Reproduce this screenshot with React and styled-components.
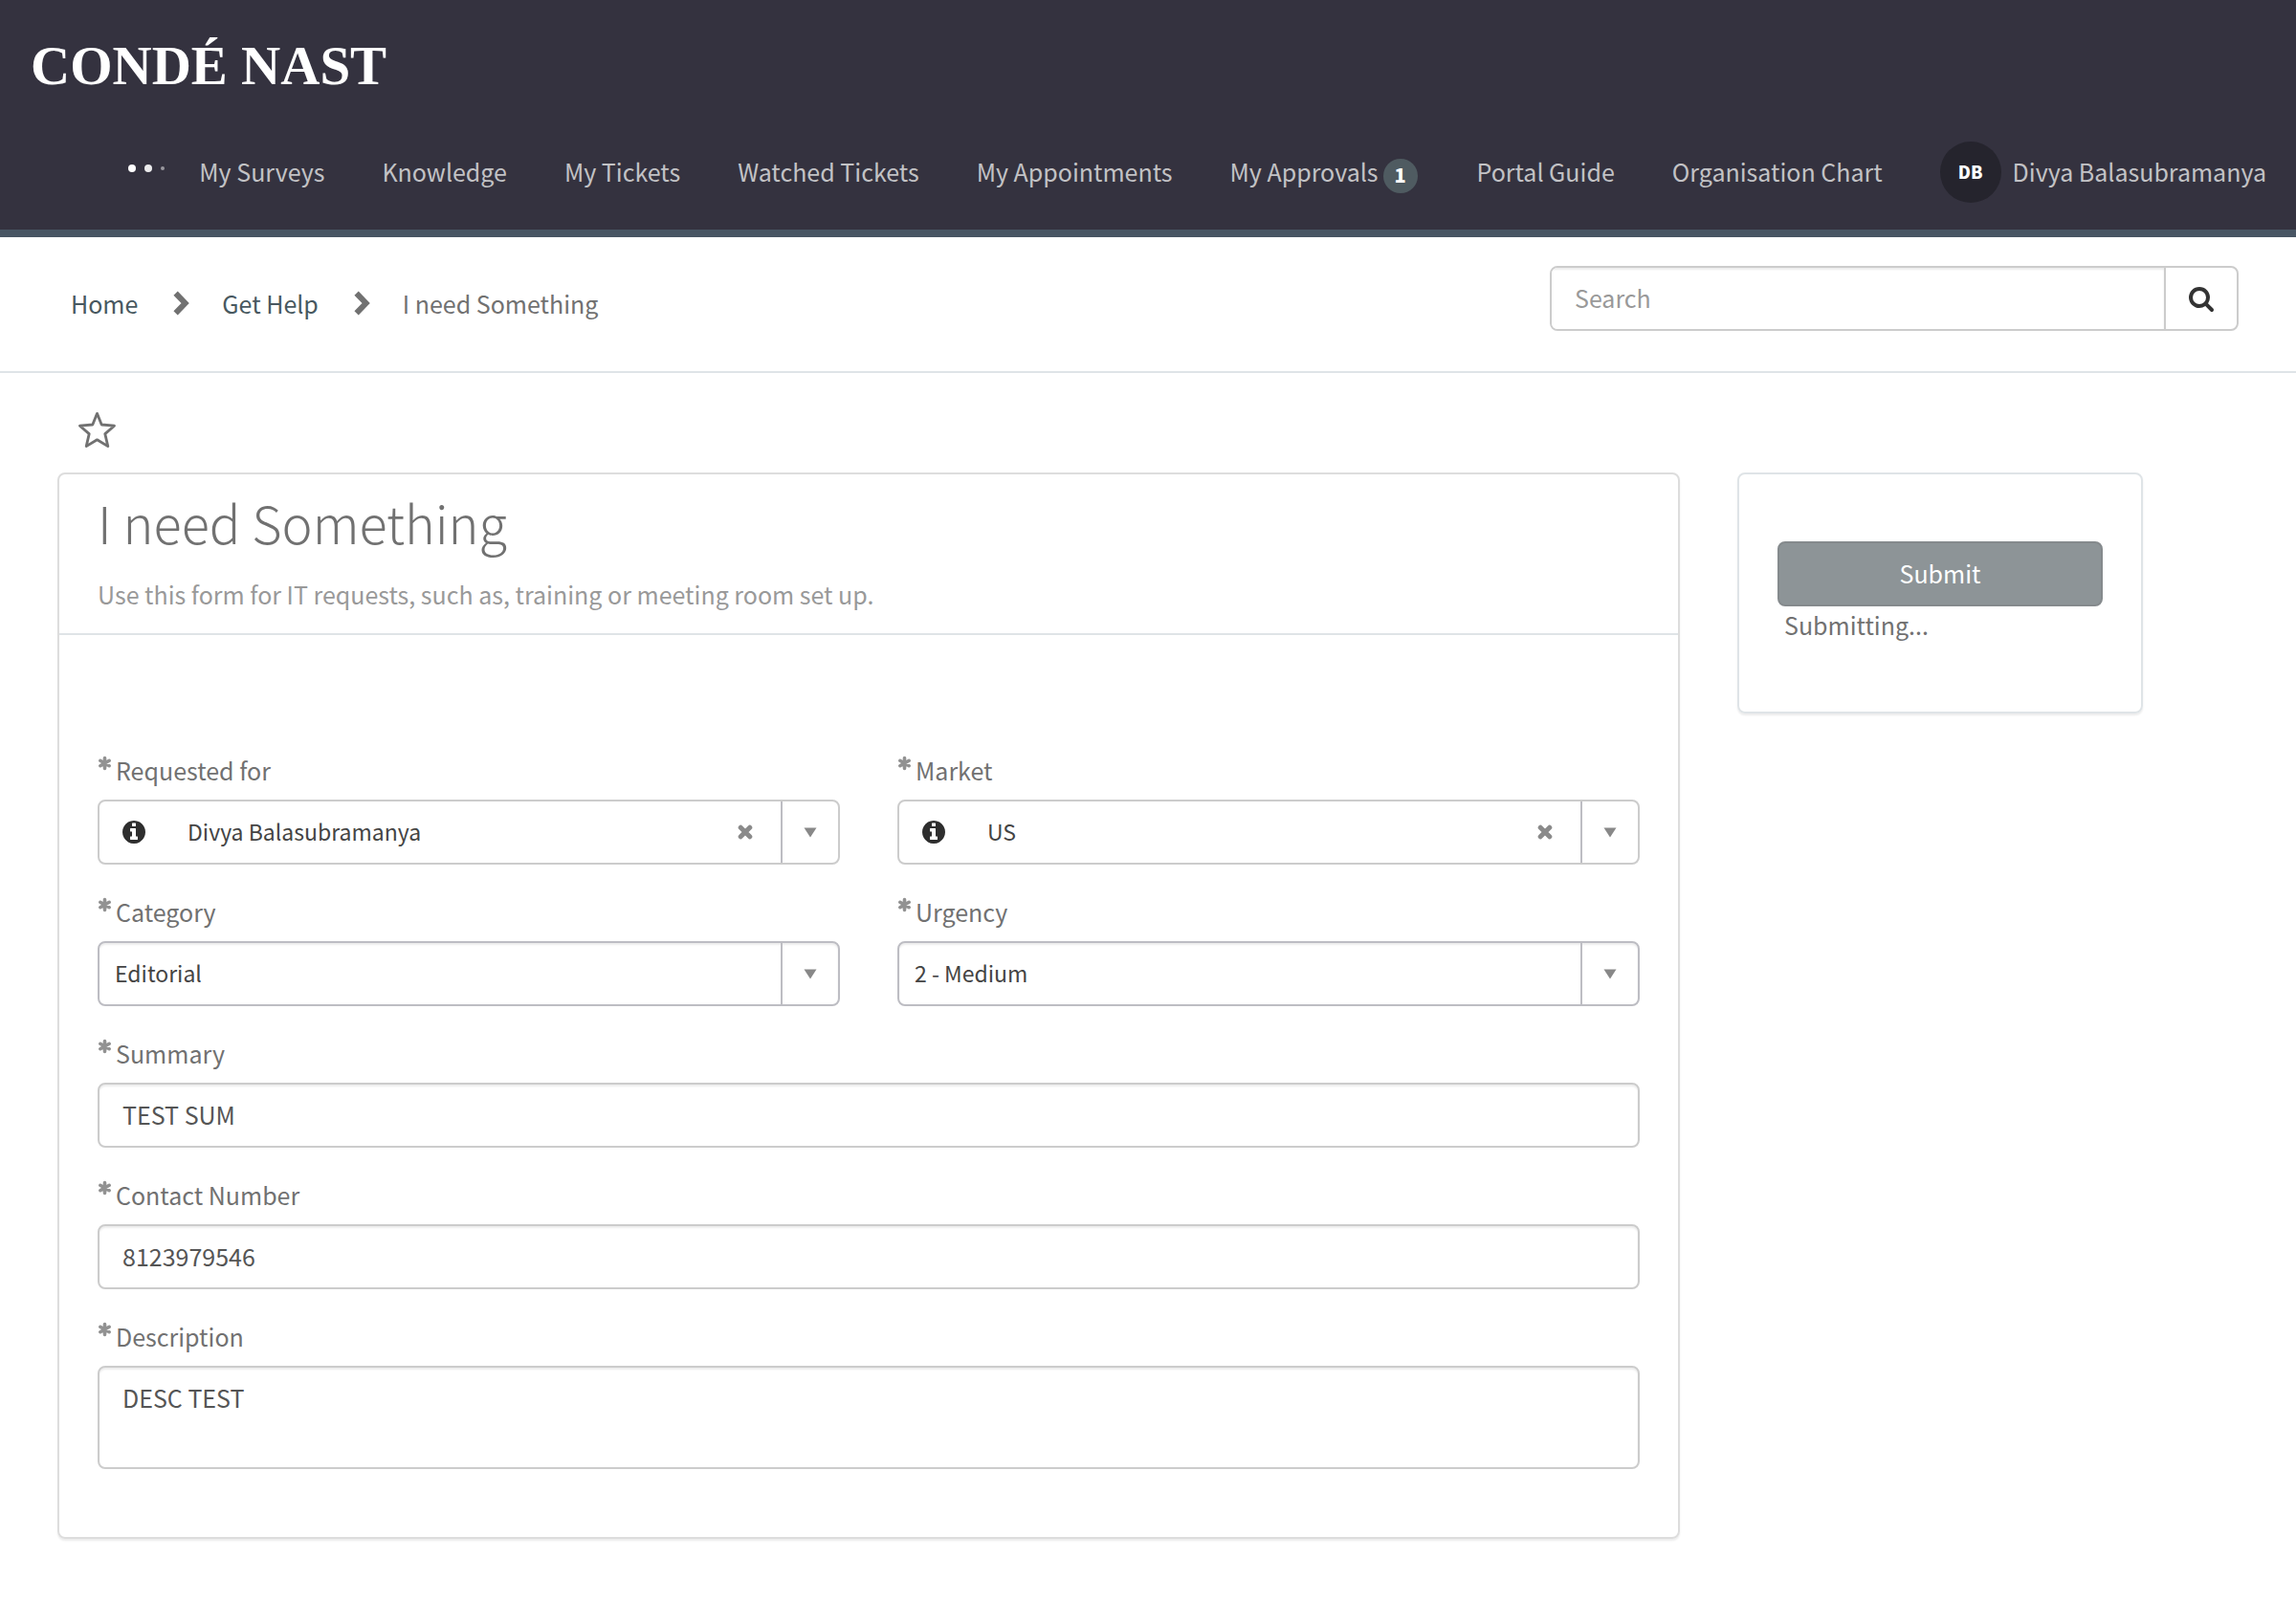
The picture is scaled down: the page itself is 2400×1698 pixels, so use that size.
import React from "react";
import styled, { createGlobalStyle } from "styled-components";

const GlobalStyle = createGlobalStyle`
  *, *::before, *::after { box-sizing: border-box; }
  body {
    margin: 0;
    background: #ffffff;
    color: #717171;
    font-family: "Noto Sans CJK SC", "Noto Sans", sans-serif;
    font-size: 25px;
    line-height: 38px;
  }
  h1, p, ul, ol { margin: 0; padding: 0; }
  ul, ol { list-style: none; }
  a { color: inherit; text-decoration: none; }
  button, input, textarea, select { font: inherit; color: inherit; margin: 0; }
  button { background: none; border: 0; padding: 0; cursor: pointer; }
  svg { display: block; flex: none; }
`;

const Header = styled.header`
  background: #34323f;
  border-bottom: 8px solid #485563;
`;

const Brand = styled.a`
  display: block;
  padding: 39px 32px 21px;
  color: #ffffff;
  font-family: "Liberation Serif", serif;
  font-size: 57px;
  font-weight: 700;
  line-height: 60px;
`;

const Nav = styled.nav`
  display: flex;
  align-items: center;
  justify-content: flex-end;
  height: 120px;
  padding-right: 31px;
  color: #c2c2c5;
`;

const Loading = styled.span`
  display: flex;
  align-items: center;
  gap: 9px;
  padding-bottom: 8px;
  margin-right: 36px;
`;

const Dot = styled.i`
  width: ${(p) => p.$size}px;
  height: ${(p) => p.$size}px;
  border-radius: 50%;
  background: #ffffff;
  opacity: ${(p) => p.$opacity};
`;

const NavList = styled.ul`
  display: flex;
  align-items: center;
  gap: 60px;
`;

const NavLink = styled.a`
  display: flex;
  align-items: center;
  white-space: nowrap;
`;

const NavText = styled.span`
  padding-bottom: 2px;
`;

const Badge = styled.span`
  width: 36px;
  height: 36px;
  margin: 8px 2px 0 5px;
  border-radius: 50%;
  background: #4f5b61;
  color: #ffffff;
  font-size: 20px;
  font-weight: 900;
  line-height: 34px;
  text-align: center;
`;

const Avatar = styled.span`
  width: 64px;
  height: 64px;
  margin-right: 12px;
  border-radius: 50%;
  background: #25242d;
  color: #ffffff;
  font-size: 18px;
  font-weight: 900;
  line-height: 62px;
  text-align: center;
`;

const TopBar = styled.div`
  display: flex;
  justify-content: space-between;
  align-items: flex-start;
  padding: 30px 60px 32px 74px;
  border-bottom: 2px solid #dfe4e7;
`;

const Crumbs = styled.ol`
  display: flex;
  align-items: center;
  height: 78px;
`;

const Crumb = styled.li`
  display: flex;
  align-items: center;
  color: ${(p) => (p.$current ? "#717171" : "#485860")};

  svg { margin: 0 34px 0 37px; }
`;

const Search = styled.form`
  display: flex;
  flex: 0 1 720px;
  height: 68px;
  border: 2px solid #cccccc;
  border-radius: 8px;
  overflow: hidden;
`;

const SearchInput = styled.input`
  flex: 1;
  min-width: 0;
  padding: 0 24px 2px;
  border: 0;
  outline: 0;
  background: #ffffff;
  box-shadow: inset 0 2px 2px rgba(0, 0, 0, 0.08);

  &::placeholder { color: #999999; opacity: 1; }
`;

const SearchButton = styled.button`
  display: flex;
  align-items: center;
  justify-content: center;
  width: 76px;
  border-left: 2px solid #cccccc;
  color: #333333;
`;

const Main = styled.main`
  padding: 0 160px 80px 60px;
`;

const Favourite = styled.button`
  display: block;
  margin: 40px 0 24px 21px;
  color: #717171;
`;

const Columns = styled.div`
  display: grid;
  grid-template-columns: minmax(0, 4fr) minmax(0, 1fr);
  gap: 60px;
  align-items: start;
`;

const Panel = styled.section`
  border: 2px solid ${(p) => p.$edge};
  border-radius: 8px;
  box-shadow: 0 2px 2px rgba(0, 0, 0, 0.08);
`;

const PanelHead = styled.div`
  padding: 20px 40px 22px;
  border-bottom: 2px solid #dfe4e7;
`;

const Title = styled.h1`
  margin-bottom: 26px;
  font-size: 54px;
  font-weight: 300;
  line-height: 60px;
`;

const Lead = styled.p`
  color: #999999;
`;

const Form = styled.form`
  display: grid;
  grid-template-columns: repeat(2, minmax(0, 1fr));
  gap: 30px 60px;
  padding: 122px 40px 71px;
`;

const FieldBox = styled.div`
  grid-column: ${(p) => (p.$wide ? "1 / -1" : "auto")};
`;

const Label = styled.label`
  display: flex;
  gap: 4px;
  margin-bottom: 12px;

  svg { margin-top: 4px; }
`;

const TextInput = styled.input`
  display: block;
  width: 100%;
  height: 68px;
  padding: 0 24px 2px;
  border: 2px solid #cccccc;
  border-radius: 8px;
  background: #ffffff;
  box-shadow: inset 0 2px 2px rgba(0, 0, 0, 0.08);
  color: #555555;
`;

const TextArea = styled.textarea`
  display: block;
  width: 100%;
  height: 108px;
  padding: 12px 24px;
  border: 2px solid #cccccc;
  border-radius: 8px;
  background: #ffffff;
  box-shadow: inset 0 2px 2px rgba(0, 0, 0, 0.08);
  color: #555555;
  resize: none;
`;

const Combo = styled.div`
  display: flex;
  height: 68px;
  border: 2px solid ${(p) => (p.$plain ? "#bdbdc3" : "#cccccc")};
  border-radius: 8px;
  box-shadow: ${(p) => (p.$plain ? "inset 0 2px 2px rgba(0, 0, 0, 0.08)" : "none")};
  color: #444444;
`;

const InfoButton = styled.button`
  width: 76px;
  padding-left: 22px;
  color: #2e2e2e;
`;

const Select = styled.select`
  flex: 1;
  min-width: 0;
  padding: 0 16px 2px;
  border: 0;
  outline: 0;
  appearance: none;
  background: transparent;
  color: #444444;
  font-size: 23px;
`;

const ClearButton = styled.button`
  display: flex;
  align-items: center;
  justify-content: center;
  width: 74px;
  color: #8a8a8a;
`;

const Arrow = styled.span`
  display: flex;
  align-items: center;
  justify-content: center;
  width: 60px;
  border-left: 2px solid #bdbdc3;
  color: #888888;
`;

const SubmitBox = styled.div`
  padding: 70px 40px 72px;
`;

const SubmitButton = styled.button`
  display: block;
  width: 100%;
  height: 68px;
  padding-bottom: 2px;
  border: 2px solid #858a8d;
  border-radius: 8px;
  background: #8d9497;
  color: #ffffff;
`;

const Status = styled.p`
  padding-left: 7px;
`;

const SearchIcon = () => (
  <svg width="28" height="28" viewBox="0 0 1792 1792" fill="currentColor" aria-hidden="true">
    <path d="M1216 832q0-185-131.5-316.5t-316.5-131.5-316.5 131.5-131.5 316.5 131.5 316.5 316.5 131.5 316.5-131.5 131.5-316.5zm512 832q0 52-38 90t-90 38q-54 0-90-38l-343-342q-179 124-399 124-143 0-273.5-55.5t-225-150-150-225-55.5-273.5 55.5-273.5 150-225 225-150 273.5-55.5 273.5 55.5 225 150 150 225 55.5 273.5q0 220-124 399l343 343q37 37 37 90z" />
  </svg>
);

const InfoIcon = () => (
  <svg width="28" height="28" viewBox="0 0 1792 1792" fill="currentColor" aria-hidden="true">
    <path d="M1152 1376v-160q0-14-9-23t-23-9h-96v-512q0-14-9-23t-23-9h-320q-14 0-23 9t-9 23v160q0 14 9 23t23 9h96v320h-96q-14 0-23 9t-9 23v160q0 14 9 23t23 9h448q14 0 23-9t9-23zm-128-896v-160q0-14-9-23t-23-9h-192q-14 0-23 9t-9 23v160q0 14 9 23t23 9h192q14 0 23-9t9-23zm640 416q0 209-103 385.5t-279.5 279.5-385.5 103-385.5-103-279.5-279.5-103-385.5 103-385.5 279.5-279.5 385.5-103 385.5 103 279.5 279.5 103 385.5z" />
  </svg>
);

const ChevronIcon = () => (
  <svg width="17" height="26" viewBox="0 0 17 26" fill="none" stroke="#717171" strokeWidth="6" aria-hidden="true">
    <path d="M2.6 2.6 12.6 13 2.6 23.4" />
  </svg>
);

const StarIcon = () => (
  <svg width="40" height="40" viewBox="0 0 40 40" fill="none" stroke="currentColor" strokeWidth="2.8" strokeLinejoin="round" aria-hidden="true">
    <path d="M20.5 2.4 25.2 14 38.5 15.2 28.8 23.6 31.8 36.6 20.5 29.8 9.2 36.6 12.2 23.6 2.5 15.2 15.8 14Z" />
  </svg>
);

const RequiredIcon = () => (
  <svg width="15" height="16" viewBox="0 0 15 16" stroke="#929292" strokeWidth="3.6" strokeLinecap="round" role="img" aria-label="Required">
    <path d="M7.5 2.6v10.8M2.8 5.3l9.4 5.4M12.2 5.3l-9.4 5.4" />
  </svg>
);

const CrossIcon = () => (
  <svg width="16" height="16" viewBox="0 0 16 16" stroke="currentColor" strokeWidth="5" strokeLinecap="round" aria-hidden="true">
    <path d="M3.2 3.2l9.6 9.6M12.8 3.2l-9.6 9.6" />
  </svg>
);

const ArrowIcon = () => (
  <svg width="14" height="11" viewBox="0 0 14 11" fill="currentColor" aria-hidden="true">
    <path d="M0.5 0.5h13L7 10.5z" />
  </svg>
);

const NAV_ITEMS = [
  { text: "My Surveys" },
  { text: "Knowledge" },
  { text: "My Tickets" },
  { text: "Watched Tickets" },
  { text: "My Appointments" },
  { text: "My Approvals", count: 1 },
  { text: "Portal Guide" },
  { text: "Organisation Chart" },
];

function Field({ id, label, wide, children }) {
  return (
    <FieldBox $wide={wide}>
      <Label htmlFor={id}>
        <RequiredIcon />
        {label}
      </Label>
      {children}
    </FieldBox>
  );
}

function ComboField({ id, label, value, reference }) {
  return (
    <Field id={id} label={label}>
      <Combo $plain={!reference}>
        {reference && (
          <InfoButton type="button" aria-label={`Show details for ${label}`}>
            <InfoIcon />
          </InfoButton>
        )}
        <Select id={id} defaultValue={value}>
          <option>{value}</option>
        </Select>
        {reference && (
          <ClearButton type="button" aria-label={`Clear ${label}`}>
            <CrossIcon />
          </ClearButton>
        )}
        <Arrow>
          <ArrowIcon />
        </Arrow>
      </Combo>
    </Field>
  );
}

export default function App() {
  return (
    <>
      <GlobalStyle />
      <Header>
        <Brand href="#">CONDÉ NAST</Brand>
        <Nav aria-label="Main">
          <Loading>
            <Dot $size={8} $opacity={1} />
            <Dot $size={8} $opacity={0.9} />
            <Dot $size={4} $opacity={0.5} />
          </Loading>
          <NavList>
            {NAV_ITEMS.map((item) => (
              <li key={item.text}>
                <NavLink href="#">
                  <NavText>{item.text}</NavText>
                  {item.count && <Badge>{item.count}</Badge>}
                </NavLink>
              </li>
            ))}
            <li>
              <NavLink href="#">
                <Avatar>DB</Avatar>
                <NavText>Divya Balasubramanya</NavText>
              </NavLink>
            </li>
          </NavList>
        </Nav>
      </Header>

      <TopBar>
        <nav aria-label="Breadcrumb">
          <Crumbs>
            <Crumb>
              <a href="#">Home</a>
              <ChevronIcon />
            </Crumb>
            <Crumb>
              <a href="#">Get Help</a>
              <ChevronIcon />
            </Crumb>
            <Crumb $current>I need Something</Crumb>
          </Crumbs>
        </nav>
        <Search role="search">
          <SearchInput type="text" placeholder="Search" aria-label="Search" />
          <SearchButton type="button" aria-label="Submit search">
            <SearchIcon />
          </SearchButton>
        </Search>
      </TopBar>

      <Main>
        <Favourite type="button" aria-label="Add to favourites">
          <StarIcon />
        </Favourite>
        <Columns>
          <Panel $edge="#dddddd">
            <PanelHead>
              <Title>I need Something</Title>
              <Lead>Use this form for IT requests, such as, training or meeting room set up.</Lead>
            </PanelHead>
            <Form>
              <ComboField id="requested-for" label="Requested for" value="Divya Balasubramanya" reference />
              <ComboField id="market" label="Market" value="US" reference />
              <ComboField id="category" label="Category" value="Editorial" />
              <ComboField id="urgency" label="Urgency" value="2 - Medium" />
              <Field id="summary" label="Summary" wide>
                <TextInput id="summary" type="text" defaultValue="TEST SUM" />
              </Field>
              <Field id="contact" label="Contact Number" wide>
                <TextInput id="contact" type="text" defaultValue="8123979546" />
              </Field>
              <Field id="description" label="Description" wide>
                <TextArea id="description" defaultValue="DESC TEST" />
              </Field>
            </Form>
          </Panel>
          <Panel $edge="#dfe4e7">
            <SubmitBox>
              <SubmitButton type="button">Submit</SubmitButton>
              <Status role="status">Submitting...</Status>
            </SubmitBox>
          </Panel>
        </Columns>
      </Main>
    </>
  );
}
